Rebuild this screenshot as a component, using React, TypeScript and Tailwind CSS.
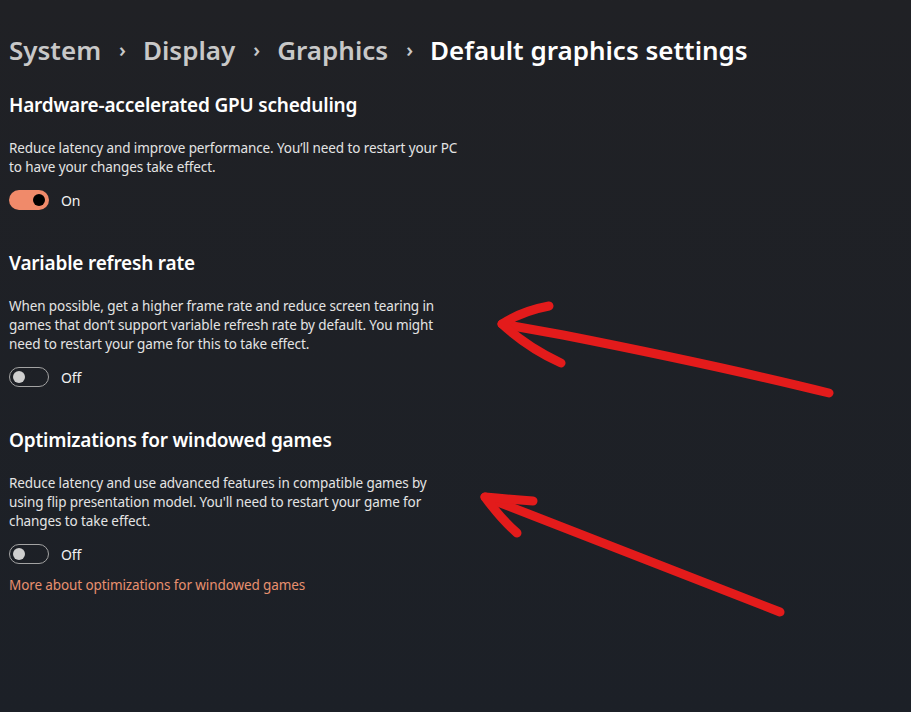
import React from 'react';

function Toggle({ on }: { on: boolean }) {
  return (
    <div className="flex items-center gap-3 h-5">
      {on ? (
        <div className="w-10 h-5 rounded-full bg-[#f08a6a] flex items-center justify-end px-[4px]">
          <div className="w-3 h-3 rounded-full bg-black" />
        </div>
      ) : (
        <div className="w-10 h-5 rounded-full border border-[#a3a3a3] flex items-center px-[3px]">
          <div className="w-3 h-3 rounded-full bg-[#cfcfcf]" />
        </div>
      )}
      <span className="text-[14px] tracking-[-0.1px] text-[#f2f2f2]">{on ? 'On' : 'Off'}</span>
    </div>
  );
}

function Section({
  title,
  lines,
  on,
}: {
  title: string;
  lines: string[];
  on: boolean;
}) {
  return (
    <div className="flex flex-col">
      <h2 className="text-[19px] leading-[28px] tracking-[-0.2px] font-semibold text-white">{title}</h2>
      <p className="mt-[20px] text-[13.5px] leading-[19px] tracking-[-0.1px] text-[#e4e4e4]">
        {lines.map((l) => (
          <span key={l} className="block whitespace-nowrap">
            {l}
          </span>
        ))}
      </p>
      <div className="mt-[13px]">
        <Toggle on={on} />
      </div>
    </div>
  );
}

function Arrows() {
  return (
    <svg
      className="absolute inset-0 pointer-events-none"
      width="911"
      height="712"
      viewBox="0 0 911 712"
      fill="none"
      stroke="#e31b1b"
      strokeWidth="9"
      strokeLinecap="round"
      strokeLinejoin="round"
    >
      <path d="M829 393 Q720 366 563 335 Q530 329 502 324" />
      <path d="M549 306 Q522 311 502 324 Q528 348 561 363" />
      <path d="M780 612 Q640 558 485 497" />
      <path d="M533 501 Q505 499 485 497 Q501 519 517 533" />
    </svg>
  );
}

export default function App() {
  return (
    <div
      className="relative w-[911px] h-[712px] overflow-hidden bg-gradient-to-b from-[#202125] to-[#1c2027] pl-[9px] pt-[30px]"
      style={{ fontFamily: '"Noto Sans", "Open Sans", sans-serif' }}
    >
      <div className="flex items-center h-10 text-[26px] font-semibold leading-10">
        <span className="text-[#c8c8c8]">System</span>
        <span className="ml-[18px] mr-[17px] text-[20px] text-[#c8c8c8]">›</span>
        <span className="text-[#c8c8c8]">Display</span>
        <span className="ml-[18px] mr-[17px] text-[20px] text-[#c8c8c8]">›</span>
        <span className="text-[#c8c8c8]">Graphics</span>
        <span className="ml-[18px] mr-[17px] text-[20px] text-[#c8c8c8]">›</span>
        <span className="text-white">Default graphics settings</span>
      </div>

      <div className="mt-[21px] flex flex-col gap-[39px]">
        <Section
          title="Hardware-accelerated GPU scheduling"
          lines={[
            'Reduce latency and improve performance. You’ll need to restart your PC',
            'to have your changes take effect.',
          ]}
          on
        />
        <Section
          title="Variable refresh rate"
          lines={[
            'When possible, get a higher frame rate and reduce screen tearing in',
            'games that don’t support variable refresh rate by default. You might',
            'need to restart your game for this to take effect.',
          ]}
          on={false}
        />
        <div className="flex flex-col">
          <Section
            title="Optimizations for windowed games"
            lines={[
              'Reduce latency and use advanced features in compatible games by',
              "using flip presentation model. You'll need to restart your game for",
              'changes to take effect.',
            ]}
            on={false}
          />
          <a className="mt-[12px] text-[13.5px] leading-[19px] tracking-[-0.1px] text-[#e8906f] cursor-pointer">
            More about optimizations for windowed games
          </a>
        </div>
      </div>

      <Arrows />
    </div>
  );
}
